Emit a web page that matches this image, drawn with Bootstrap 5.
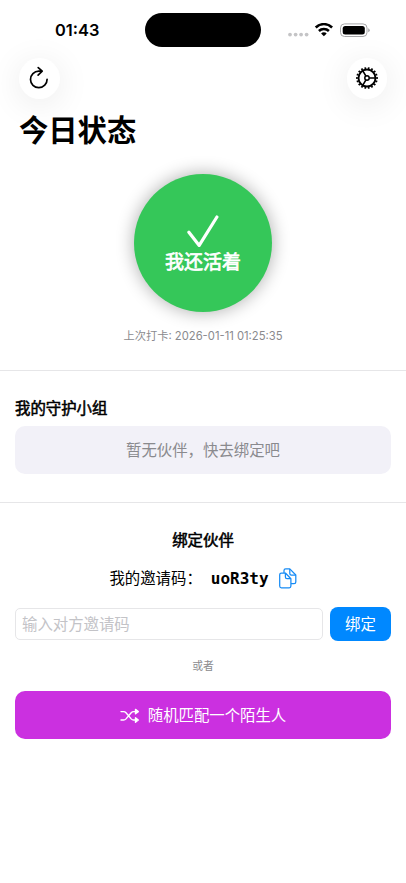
<!DOCTYPE html>
<html lang="zh-CN">
<head>
<meta charset="utf-8">
<meta name="viewport" content="width=device-width, initial-scale=1">
<title>今日状态</title>
<link rel="stylesheet" href="https://cdn.jsdelivr.net/npm/bootstrap@5.3.0/dist/css/bootstrap.min.css">
<style>
body{font-family:Inter,"Noto Sans CJK SC",sans-serif;font-size:15.4px;color:#000;background:#fff;width:406px;height:883px;overflow:hidden}
svg{display:block;flex:none}
.status-bar{height:58px;padding-top:13px}
.side{width:145px;height:34px}
.clock{font-size:16.4px;font-weight:600;line-height:35px;padding-left:55px}
.island{width:116px;height:34px;background:#000}
.signal{padding:5px 0 0 27px}
.tool-bar{height:40px;padding:0 19px}
.round-btn{width:40.5px;height:40.5px;padding:0;background:#fff;border:0;box-shadow:0 5px 34px rgba(0,0,0,.09)}
.page-title{font-size:29.3px;font-weight:700;line-height:40px;margin:13px 0 0;padding-left:19px}
.checkin{width:138px;height:138px;margin-top:23px;background:#35c759;color:#fff;border:0;padding:0;box-shadow:0 0 18px rgba(0,0,0,.33)}
.checkin-label{font-size:19px;font-weight:400;-webkit-text-stroke:.7px;line-height:24px;margin-top:3px}
.checkin svg{margin-top:4px}
.last{font-size:11.25px;line-height:16px;margin-top:16px;color:#8a8a8e}
.rule{height:1px;background:#e6e6e8}
.rule-first{margin-top:26px}
.rule-second{margin-top:28px}
.heading{font-size:15.4px;font-weight:400;-webkit-text-stroke:.55px #000;line-height:20px;margin:0;color:#000}
.empty-box{height:48px;margin-top:7px;padding-top:2px;border-radius:10px;background:#f2f1f8;color:#8a8a8e}
.px15{padding-left:15px;padding-right:15px}
.code-row{height:28px;margin-top:14px}
.code-row svg{margin-top:-2px}
.code{font-family:"DejaVu Sans Mono","Liberation Mono",monospace;font-weight:700;font-size:16px;margin:0 10px 0 9px}
.bind-row{gap:7px;margin-top:14px}
.invite{height:32px;border:1px solid #e6e6e8;border-radius:5px;padding:0 6px;font-size:15.4px;color:#000}
.invite::placeholder{color:#c3c3c7;opacity:1}
.bind{width:61px;height:34px;background:#0088ff;color:#fff;border:0;border-radius:8px;padding:1px 0 0;font-size:15.4px}
.or{font-size:10.8px;line-height:16px;margin-top:18px;color:#8a8a8e}
.match-btn{height:48px;margin-top:16px;background:#cb30e0;color:#fff;border:0;border-radius:10px;font-size:15.4px;padding:1px 0 0}
</style>
<script src="https://cdn.jsdelivr.net/npm/bootstrap@5.3.0/dist/js/bootstrap.bundle.min.js"></script>
</head>
<body>
<header class="status-bar d-flex">
  <div class="side clock">01:43</div>
  <div class="island rounded-pill"></div>
  <div class="side signal d-flex align-items-center">
    <svg width="82" height="20" viewBox="0 0 82 20">
      <g fill="#c4c4c6"><circle cx="2" cy="11.6" r="1.9"/><circle cx="7.6" cy="11.6" r="1.9"/><circle cx="13.1" cy="11.6" r="1.9"/><circle cx="18.6" cy="11.6" r="1.9"/></g>
      <g fill="none" stroke="#000" stroke-width="2.5"><path d="M27.7 4.5a11.6 11.6 0 0 1 16.4 0"/><path d="M30.9 8a7.1 7.1 0 0 1 10 0"/></g>
      <path d="M33.1 10.4a3.9 3.9 0 0 1 5.6 0L35.9 13.2z"/>
      <rect x="52.5" y=".9" width="26.5" height="12.6" rx="4" fill="none" stroke="#a6a6a8"/>
      <rect x="54.7" y="2.9" width="22.1" height="8.6" rx="2.5"/>
      <path d="M80.2 5.3q1.5.7 1.5 2t-1.5 2z" fill="#a6a6a8"/>
    </svg>
  </div>
</header>
<nav class="tool-bar d-flex justify-content-between">
  <button class="btn round-btn rounded-circle d-flex align-items-center justify-content-center" aria-label="刷新">
    <svg width="20" height="24" viewBox="0 0 20 24" fill="none" stroke="#000" stroke-width="1.7" stroke-linecap="round" stroke-linejoin="round"><path d="M18.1 13.3a8.3 8.3 0 1 1-8.3-8.2h3.3M9.2 1.6l4 3.6-4.1 4"/></svg>
  </button>
  <button class="btn round-btn rounded-circle d-flex align-items-center justify-content-center" aria-label="设置">
    <svg width="22" height="22" viewBox="-11 -11 22 22" fill="none" stroke="#000"><circle r="8.5" stroke-width="1.9"/><circle r="10" stroke-width="1.8" pathLength="108" stroke-dasharray="3 3" stroke-dashoffset="1.5"/><circle r="2.2" stroke-width="1.5"/><path d="M2.4 0H8.5M-1.2-2.1L-4.3-7.4M-1.2 2.1L-4.3 7.4" stroke-width="1.6"/></svg>
  </button>
</nav>
<main>
  <h1 class="page-title">今日状态</h1>
  <section class="d-flex flex-column align-items-center">
    <button class="btn checkin rounded-circle d-flex flex-column align-items-center justify-content-center">
      <svg width="32" height="33" viewBox="0 0 32 33" fill="none" stroke="#fff" stroke-width="3.2" stroke-linecap="round" stroke-linejoin="round"><path d="M1.9 17.2l10.3 13.2L29.9 2"/></svg>
      <span class="checkin-label">我还活着</span>
    </button>
    <div class="last">上次打卡: 2026-01-11 01:25:35</div>
  </section>
  <div class="rule rule-first"></div>
  <section class="px15">
    <h2 class="heading pt-4 mt-1">我的守护小组</h2>
    <div class="empty-box d-flex align-items-center justify-content-center">暂无伙伴，快去绑定吧</div>
  </section>
  <div class="rule rule-second"></div>
  <section class="px15">
    <h2 class="heading pt-4 mt-1 text-center">绑定伙伴</h2>
    <div class="code-row d-flex align-items-center justify-content-center">
      <span>我的邀请码：</span><span class="code">uoR3ty</span>
      <svg width="18" height="21" viewBox="0 0 18 21" fill="none" stroke="#168bf5" stroke-width="1.25" stroke-linejoin="round"><path d="M5 5V2.6Q5 .9 6.7.9H10.8L16.8 7V14Q16.8 15.7 15.1 15.7H12"/><path d="M10.8.9V5.4Q10.8 7 12.4 7H16.8"/><path d="M2.4 5H6.4L11.9 10.7V18Q11.9 19.8 10.2 19.8H2.4Q.7 19.8.7 18V6.7Q.7 5 2.4 5z"/><path d="M6.4 5V9Q6.4 10.7 8 10.7H11.9"/></svg>
    </div>
    <div class="bind-row d-flex align-items-center">
      <input class="form-control invite" placeholder="输入对方邀请码" aria-label="输入对方邀请码">
      <button class="btn bind flex-shrink-0">绑定</button>
    </div>
    <div class="or text-center">或者</div>
    <button class="btn match-btn w-100 d-flex align-items-center justify-content-center gap-2">
      <svg width="20" height="16" viewBox="0 0 20 16" fill="none" stroke="#fff" stroke-width="1.4" stroke-linecap="round" stroke-linejoin="round"><path d="M1 3.6H3.6Q5 3.6 6 4.7L11.2 10.9Q12.2 12 13.6 12H16M1 12H3.6Q5 12 6 10.9L11.2 4.7Q12.2 3.6 13.6 3.6H16"/><path d="M15.5 1.4L18.3 3.6 15.5 5.8zM15.5 9.8L18.3 12 15.5 14.2z" fill="#fff"/></svg>
      <span>随机匹配一个陌生人</span>
    </button>
  </section>
</main>
</body>
</html>
